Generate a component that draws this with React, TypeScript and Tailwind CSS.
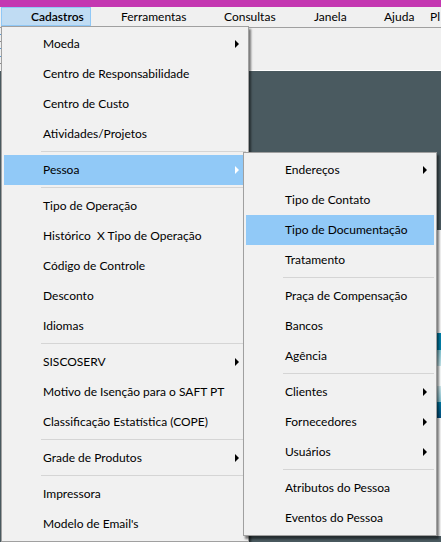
type Entry = {
  label: string;
  arrow?: boolean;
  active?: boolean;
  children?: Entry[][];
};

const pessoaMenu: Entry[][] = [
  [
    { label: "Endereços", arrow: true },
    { label: "Tipo de Contato" },
    { label: "Tipo de Documentação", active: true },
    { label: "Tratamento" },
  ],
  [{ label: "Praça de Compensação" }, { label: "Bancos" }, { label: "Agência" }],
  [
    { label: "Clientes", arrow: true },
    { label: "Fornecedores", arrow: true },
    { label: "Usuários", arrow: true },
  ],
  [{ label: "Atributos do Pessoa" }, { label: "Eventos do Pessoa" }],
];

const cadastrosMenu: Entry[][] = [
  [
    { label: "Moeda", arrow: true },
    { label: "Centro de Responsabilidade" },
    { label: "Centro de Custo" },
    { label: "Atividades/Projetos" },
  ],
  [{ label: "Pessoa", arrow: true, active: true, children: pessoaMenu }],
  [
    { label: "Tipo de Operação" },
    { label: "Histórico  X Tipo de Operação" },
    { label: "Código de Controle" },
    { label: "Desconto" },
    { label: "Idiomas" },
  ],
  [
    { label: "SISCOSERV", arrow: true },
    { label: "Motivo de Isenção para o SAFT PT" },
    { label: "Classificação Estatística (COPE)" },
  ],
  [{ label: "Grade de Produtos", arrow: true }],
  [{ label: "Impressora" }, { label: "Modelo de Email's" }],
];

const menuBar = [
  { label: "Cadastros", style: "w-[90px] pl-[29px] bg-[#c0dcf3] border-[#90c8f6] font-semibold" },
  { label: "Ferramentas", style: "w-[103px] pl-[29px] border-transparent" },
  { label: "Consultas", style: "w-[90px] pl-[29px] border-transparent" },
  { label: "Janela", style: "w-[70px] pl-[29px] border-transparent" },
  { label: "Ajuda", style: "w-[69px] pl-[29px] border-transparent" },
  { label: "Pl", style: "pl-1.5 border-transparent" },
];

function Row({ entry }: { entry: Entry }) {
  return (
    <li className="relative">
      <button
        type="button"
        className={`flex h-[30px] w-full items-center justify-between pl-[39px] pr-[7px] text-left ${
          entry.active ? "bg-[#91c9f7]" : ""
        }`}
      >
        <span className="whitespace-pre">{entry.label}</span>
        {entry.arrow && (
          <svg
            viewBox="0 0 4 8"
            className={`h-2 w-1 shrink-0 ${entry.children ? "text-white" : "text-black"}`}
            aria-hidden="true"
          >
            <path d="M0 0 L4 4 L0 8 Z" fill="currentColor" />
          </svg>
        )}
      </button>
      {entry.children && (
        <Menu groups={entry.children} place="left-full -top-[3px] -ml-[3px] w-[194px]" />
      )}
    </li>
  );
}

function Menu({ groups, place }: { groups: Entry[][]; place: string }) {
  return (
    <div
      className={`absolute z-10 border border-[#a0a0a0] bg-[#f1f1f1] p-0.5 shadow-[2px_3px_2px_rgba(0,0,0,0.5)] ${place}`}
    >
      {groups.map((group, i) => (
        <div key={group[0].label}>
          {i > 0 && (
            <div className="h-1.5 pl-[37px] pt-0.5">
              <hr className="border-[#d5d5d5]" />
            </div>
          )}
          <ul>
            {group.map((entry) => (
              <Row key={entry.label} entry={entry} />
            ))}
          </ul>
        </div>
      ))}
    </div>
  );
}

export default function App() {
  return (
    <div className="relative flex min-h-screen flex-col overflow-hidden bg-[#4a5a60] font-[Lato,'Open_Sans',sans-serif] text-[12px] leading-4 text-black">
      <div className="h-[7px] bg-[#c437b1]" />
      <nav className="relative flex h-[21px] overflow-hidden border-b border-[#a0a0a0] bg-[#f0f0f0] pl-px">
        {menuBar.map((item) => (
          <button
            key={item.label}
            type="button"
            className={`flex h-[19px] shrink-0 items-center border ${item.style}`}
          >
            {item.label}
          </button>
        ))}
      </nav>
      <div className="flex h-[43px] flex-col justify-evenly border-b border-white bg-[#f0f0f0]">
        <div className="h-px w-3 bg-[#5b9bd5]" />
        <div className="h-px w-3 bg-[#8a8a8a]" />
        <div className="h-px w-3 bg-[#5b9bd5]" />
        <div className="h-px w-3 bg-[#5b9bd5]" />
        <div className="h-px w-3 bg-[#8a8a8a]" />
      </div>
      <main className="flex grow flex-col pb-1.5 pl-72 pt-[159px]">
        <div className="flex grow flex-col bg-[#f4f4f4]">
          <div className="mt-[103px] h-[17px] bg-[#007fa8]" />
          <div className="h-4 bg-linear-to-b from-[#7fc4d2] to-[#c4e4ea]" />
          <div className="h-5 bg-[#f8fbfb]" />
          <div className="h-4 bg-linear-to-b from-[#cfe8ec] to-[#7fc0cf]" />
          <div className="h-4 bg-linear-to-b from-[#0077a0] to-[#004f80]" />
        </div>
      </main>
      <Menu groups={cadastrosMenu} place="left-px top-[26px] w-[248px]" />
    </div>
  );
}
